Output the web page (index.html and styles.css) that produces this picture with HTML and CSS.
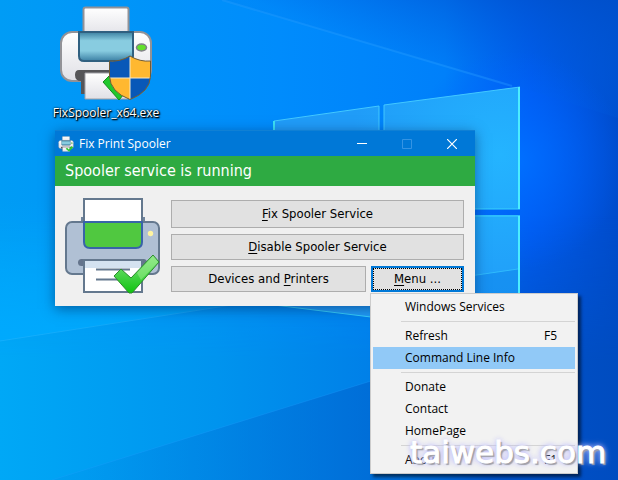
FILE: index.html
```html
<!DOCTYPE html>
<html lang="en">
<head>
<meta charset="utf-8">
<title>Fix Print Spooler</title>
<link rel="stylesheet" href="styles.css">
</head>
<body>
<main class="desktop">
  <svg class="wallpaper" viewBox="0 0 618 480" preserveAspectRatio="xMinYMin slice" aria-hidden="true">
    <defs>
      <linearGradient id="sky" x1="0" y1="0" x2="1" y2="0">
        <stop offset="0" stop-color="#009cf5"/>
        <stop offset=".45" stop-color="#008cfc"/>
        <stop offset=".72" stop-color="#0080fa"/>
        <stop offset=".86" stop-color="#005cf0"/>
        <stop offset="1" stop-color="#004ccc"/>
      </linearGradient>
      <linearGradient id="floor" x1="0" y1="0" x2="1" y2="0">
        <stop offset="0" stop-color="#00a8f6"/>
        <stop offset=".35" stop-color="#0094ee"/>
        <stop offset=".6" stop-color="#0080e8"/>
        <stop offset=".8" stop-color="#0054cc"/>
        <stop offset="1" stop-color="#004cc0"/>
      </linearGradient>
      <linearGradient id="fade" x1="0" y1="0" x2="0" y2="1">
        <stop offset=".45" stop-color="#fff" stop-opacity="0"/>
        <stop offset=".75" stop-color="#fff"/>
      </linearGradient>
      <mask id="lower"><rect width="618" height="480" fill="url(#fade)"/></mask>
      <radialGradient id="glow" gradientUnits="userSpaceOnUse" cx="515" cy="160" r="110">
        <stop offset="0" stop-color="#0070ff"/>
        <stop offset="1" stop-color="#0060ff" stop-opacity="0"/>
      </radialGradient>
      <linearGradient id="shade" gradientUnits="userSpaceOnUse" x1="400" y1="54" x2="440" y2="-60">
        <stop offset="0" stop-color="#0060e0" stop-opacity=".1"/>
        <stop offset="1" stop-color="#0050cc"/>
      </linearGradient>
      <linearGradient id="ray" gradientUnits="userSpaceOnUse" x1="0" y1="200" x2="0" y2="330">
        <stop offset="0" stop-color="#00aaff" stop-opacity="0"/>
        <stop offset="1" stop-color="#00aaff" stop-opacity=".8"/>
      </linearGradient>
      <linearGradient id="dusk" gradientUnits="userSpaceOnUse" x1="80" y1="0" x2="420" y2="0">
        <stop offset="0" stop-color="#0070d8" stop-opacity=".1"/>
        <stop offset="1" stop-color="#0060cc" stop-opacity=".7"/>
      </linearGradient>
      <radialGradient id="pane" gradientUnits="userSpaceOnUse" cx="500" cy="155" r="150">
        <stop offset="0" stop-color="#24b4ff"/>
        <stop offset="1" stop-color="#209cf8"/>
      </radialGradient>
    </defs>
    <rect width="618" height="480" fill="url(#sky)"/>
    <path d="M220 0H618V118L519 87Z" fill="url(#shade)"/>
    <rect width="618" height="480" fill="url(#floor)" mask="url(#lower)"/>
    <rect x="400" y="40" width="218" height="240" fill="url(#glow)"/>
    <path d="M222 0L512 86" stroke="#2aa0ff" stroke-opacity=".35" stroke-width="2"/>
    <path d="M0 200H273V298L0 341Z" fill="url(#ray)"/>
    <path d="M0 341L290 296" stroke="#30b8ff" stroke-opacity=".4"/>
    <path d="M52 480L400 372V480Z" fill="url(#dusk)"/>
    <path d="M52 480L400 372" stroke="#20a0ff" stroke-opacity=".3"/>
    <g fill="url(#pane)">
      <path d="M274 121L379 106V209H274Z"/>
      <path d="M384 105L520 87V209H384Z"/>
      <path d="M274 215H379V318L274 305Z"/>
      <path d="M384 215H520V338L384 319Z"/>
    </g>
    <path d="M274 140V121L379 106V140M384 140V105L520 87" fill="none" stroke="#42c8ff"/>
    <path d="M274 121V140" stroke="#3ce0f4" stroke-width="2"/>
    <path d="M384 209H520M384 216H520M274 305L379 318" stroke="#38d0fc" fill="none"/>
    <path d="M519 87V209M519 216V338" stroke="#4cecff" stroke-width="2"/>
    <path d="M470 276L518 269V338H470Z" fill="#0070e0" fill-opacity=".3"/>
    <path d="M470 276L518 269" stroke="#38c8ff" stroke-opacity=".7"/>
  </svg>

  <figure class="shortcut">
    <svg class="shortcut-icon" viewBox="58 4 96 98" role="img" aria-label="Printer">
      <defs>
        <linearGradient id="white" x1="0" y1="0" x2="0" y2="1">
          <stop offset="0" stop-color="#fff"/><stop offset="1" stop-color="#e0e0e6"/>
        </linearGradient>
        <linearGradient id="teal" x1="0" y1="0" x2="0" y2="1">
          <stop offset="0" stop-color="#3c80a0"/><stop offset=".3" stop-color="#88cce0"/>
          <stop offset=".65" stop-color="#88cce0"/><stop offset="1" stop-color="#3c80a4"/>
        </linearGradient>
        <linearGradient id="tick" x1="0" y1="0" x2="0" y2="1">
          <stop offset="0" stop-color="#88e488"/><stop offset="1" stop-color="#10c410"/>
        </linearGradient>
        <g id="printer">
          <rect x="83.500" y="7.500" width="45" height="30" rx="2" fill="url(#white)" stroke="#929297" stroke-width="2"/>
          <rect x="61" y="32" width="90" height="49" rx="11" fill="url(#white)" stroke="#929297" stroke-width="2"/>
          <path d="M79 32H133V56Q133 61 128 61H84Q79 61 79 56Z" fill="url(#teal)" stroke="#306080" stroke-width="2"/>
          <ellipse cx="141.500" cy="47.500" rx="5" ry="3.500" fill="#62e02c" stroke="#808088" stroke-width="1.500"/>
          <path d="M79 70H136V79H85V94H81V81Q75 81 75 75Q75 70 79 70Z" fill="#555558"/>
          <path d="M85 73H128V99H85Z" fill="url(#white)" stroke="#a0a0a6"/>
        </g>
      </defs>
      <use href="#printer"/>
      <path d="M103 82L109 76L124 94L119 100Z" fill="#20c82c" stroke="#148c1c"/>
      <path d="M130 56Q120 62 109.500 61V76Q110 92 130 99.500Q150 92 150.500 76V61Q140 62 130 56Z" fill="#ffb830"/>
      <path d="M130 56Q120 62 109.500 61V78H130Z" fill="#0858b8"/>
      <path d="M130 78H150.500Q149 92 130 99.500Z" fill="#0858b8"/>
      <path d="M130 57V99M110 78H150" stroke="#f4e8c8"/>
      <path d="M130 56Q120 62 109.500 61V76Q110 92 130 99.500Q150 92 150.500 76V61Q140 62 130 56Z" fill="none" stroke="#705c38"/>
    </svg>
    <figcaption>FixSpooler_x64.exe</figcaption>
  </figure>

  <section class="window" aria-label="Fix Print Spooler">
    <header class="titlebar">
      <svg class="title-icon" viewBox="58 4 96 98" aria-hidden="true">
        <use href="#printer"/>
        <path d="M104 82L113 76L123 86L140 66L150 73L125 101Z" fill="#30c830"/>
      </svg>
      <h1>Fix Print Spooler</h1>
      <button class="caption" type="button" aria-label="Minimize"><svg viewBox="0 0 10 10"><path d="M0 4.500H10" stroke="#fff"/></svg></button>
      <button class="caption" type="button" aria-label="Maximize" disabled><svg viewBox="0 0 10 10"><path d="M.5.5H9.500V9.500H.5Z" fill="none" stroke="#3494e4"/></svg></button>
      <button class="caption" type="button" aria-label="Close"><svg viewBox="0 0 10 10"><path d="M0 0L10 10M10 0L0 10" stroke="#fff" stroke-width="1.200"/></svg></button>
    </header>
    <p class="status">Spooler service is running</p>
    <div class="content">
      <svg class="printer" viewBox="0 0 96 96" role="img" aria-label="Printer ready">
        <path d="M16 26V19H80V26" fill="#70849c"/>
        <rect x="1" y="24" width="93" height="52" rx="6" fill="#b0c0d4" stroke="#64788e" stroke-width="2"/>
        <path d="M19 1H77V26H19Z" fill="#fff" stroke="#64788e" stroke-width="2"/>
        <path d="M19 24H77V44Q77 50 71 50H25Q19 50 19 44Z" fill="#50c840" stroke="#3864a8" stroke-width="2"/>
        <circle cx="85.500" cy="35.500" r="2.700" fill="#fff4a0"/>
        <rect x="13" y="61" width="69" height="7" rx="3.500" fill="#64748c"/>
        <path d="M19 62H77V94H19Z" fill="#fff" stroke="#64788e" stroke-width="2"/>
        <path d="M20 63H76V70H20Z" fill="#d4e2f0"/>
        <path d="M31 71.500H65M31 81.500H65" stroke="#64788e" stroke-width="2"/>
        <path d="M49 78L56 71L66 80L88 57L94 64L67 95H64Z" fill="url(#tick)" stroke="#2c8c2c"/>
        <path d="M72 75L88 58L93 64L76 82Z" fill="#a0f090" fill-opacity=".5"/>
      </svg>
      <div class="actions">
        <button class="push tall" type="button"><u>F</u>ix Spooler Service</button>
        <button class="push" type="button"><u>D</u>isable Spooler Service</button>
        <div class="row">
          <button class="push" type="button">Devices and <u>P</u>rinters</button>
          <div class="menu-anchor">
            <button class="push focused" type="button" aria-haspopup="menu" aria-expanded="true"><span><u>M</u>enu ...</span></button>
            <div class="menu" role="menu">
              <button type="button" role="menuitem">Windows Services</button>
              <hr>
              <button type="button" role="menuitem">Refresh<kbd>F5</kbd></button>
              <button class="active" type="button" role="menuitem">Command Line Info</button>
              <hr>
              <button type="button" role="menuitem">Donate</button>
              <button type="button" role="menuitem">Contact</button>
              <button type="button" role="menuitem">HomePage</button>
              <hr>
              <button type="button" role="menuitem">About<kbd>F1</kbd></button>
            </div>
          </div>
        </div>
      </div>
    </div>
  </section>
  <div class="watermark">taiwebs.com</div>
</main>
</body>
</html>
```
FILE: styles.css
```css
* {
  box-sizing: border-box;
}

body {
  margin: 0;
  font-family: "Open Sans", "Noto Sans", sans-serif;
  font-size: 12px;
  line-height: 16px;
}

button {
  margin: 0;
  padding: 0;
  border: 0;
  background: none;
  color: inherit;
  font: inherit;
}

.desktop {
  position: relative;
  min-height: 100vh;
  overflow: hidden;
  background: #0080f0;
}

.wallpaper {
  position: absolute;
  inset: 0;
  width: 100%;
  height: 100%;
}

.shortcut {
  position: absolute;
  left: 50px;
  top: 4px;
  display: flex;
  flex-direction: column;
  align-items: center;
  gap: 3px;
  width: 112px;
  margin: 0;
  color: #fff;
  text-shadow: 1px 1px 2px #000, 1px 1px 1px #000, 0 0 2px #000;
}

.shortcut-icon {
  width: 96px;
  height: 98px;
}

.window {
  position: absolute;
  left: 55px;
  top: 130px;
  width: 420px;
  background: #f0f0f0;
  box-shadow: 0 3px 12px rgba(0, 30, 80, .5);
}

.titlebar {
  display: flex;
  align-items: center;
  height: 26px;
  padding: 0 1px 0 3px;
  border-top: 1px solid #1080d4;
  background: #0078d7;
  color: #fff;
}

.title-icon {
  width: 16px;
  height: 16px;
  margin-right: 5px;
}

.titlebar h1 {
  flex: 1;
  margin: 0;
  font-size: 12px;
  font-weight: 400;
}

.caption {
  display: grid;
  place-items: center;
  width: 45px;
  height: 24px;
}

.caption svg {
  width: 10px;
  height: 10px;
}

.status {
  margin: 0;
  padding: 0 10px;
  background: #2eaa42;
  color: #fff;
  font-family: "DejaVu Sans Condensed", "DejaVu Sans", sans-serif;
  font-size: 16px;
  line-height: 30px;
}

.content {
  display: flex;
  gap: 10px;
  padding: 12px 11px 12px 10px;
}

.printer {
  flex: none;
  width: 96px;
  height: 96px;
}

.actions {
  display: flex;
  flex: 1;
  flex-direction: column;
  gap: 6px;
  padding-top: 2px;
}

.push {
  height: 26px;
  border: 1px solid #adadad;
  background: #e1e1e1;
  color: #000;
  font-family: "DejaVu Sans Condensed", "DejaVu Sans", sans-serif;
  font-size: 13px;
}

.tall {
  height: 28px;
}

.push u {
  text-underline-offset: 2px;
}

.row {
  display: flex;
  gap: 5px;
}

.row > .push {
  flex: 1;
}

.menu-anchor {
  position: relative;
  width: 93px;
}

.focused {
  display: grid;
  width: 100%;
  border: 2px solid #0078d7;
}

.focused span {
  display: grid;
  grid-auto-flow: column;
  justify-content: center;
  align-items: center;
  border: 1px dotted #000;
  white-space: pre;
}

.menu {
  position: absolute;
  left: -1px;
  top: 27px;
  display: flex;
  flex-direction: column;
  width: 208px;
  padding: 2px;
  border: 1px solid #ccc;
  background: #f2f2f2;
  color: #000;
  box-shadow: 3px 3px 3px rgba(0, 0, 0, .55);
}

.menu button {
  display: flex;
  justify-content: space-between;
  align-items: center;
  height: 22px;
  padding: 0 18px 0 32px;
}

.menu .active {
  background: #91c9f7;
}

.menu hr {
  width: auto;
  margin: 3px 0 3px 28px;
  border: 0;
  border-top: 1px solid #d4d4d4;
}

.menu kbd {
  font: inherit;
}

.watermark {
  position: absolute;
  left: 410px;
  top: 433px;
  color: #fff;
  font-family: "DejaVu Sans", sans-serif;
  font-size: 31px;
  line-height: 38px;
  -webkit-text-stroke: 1px #fff;
  text-shadow: 2px 2px 1px #a0a0a8, 0 0 5px #b4b4ff, 0 0 7px #c4c4ff;
}
```
